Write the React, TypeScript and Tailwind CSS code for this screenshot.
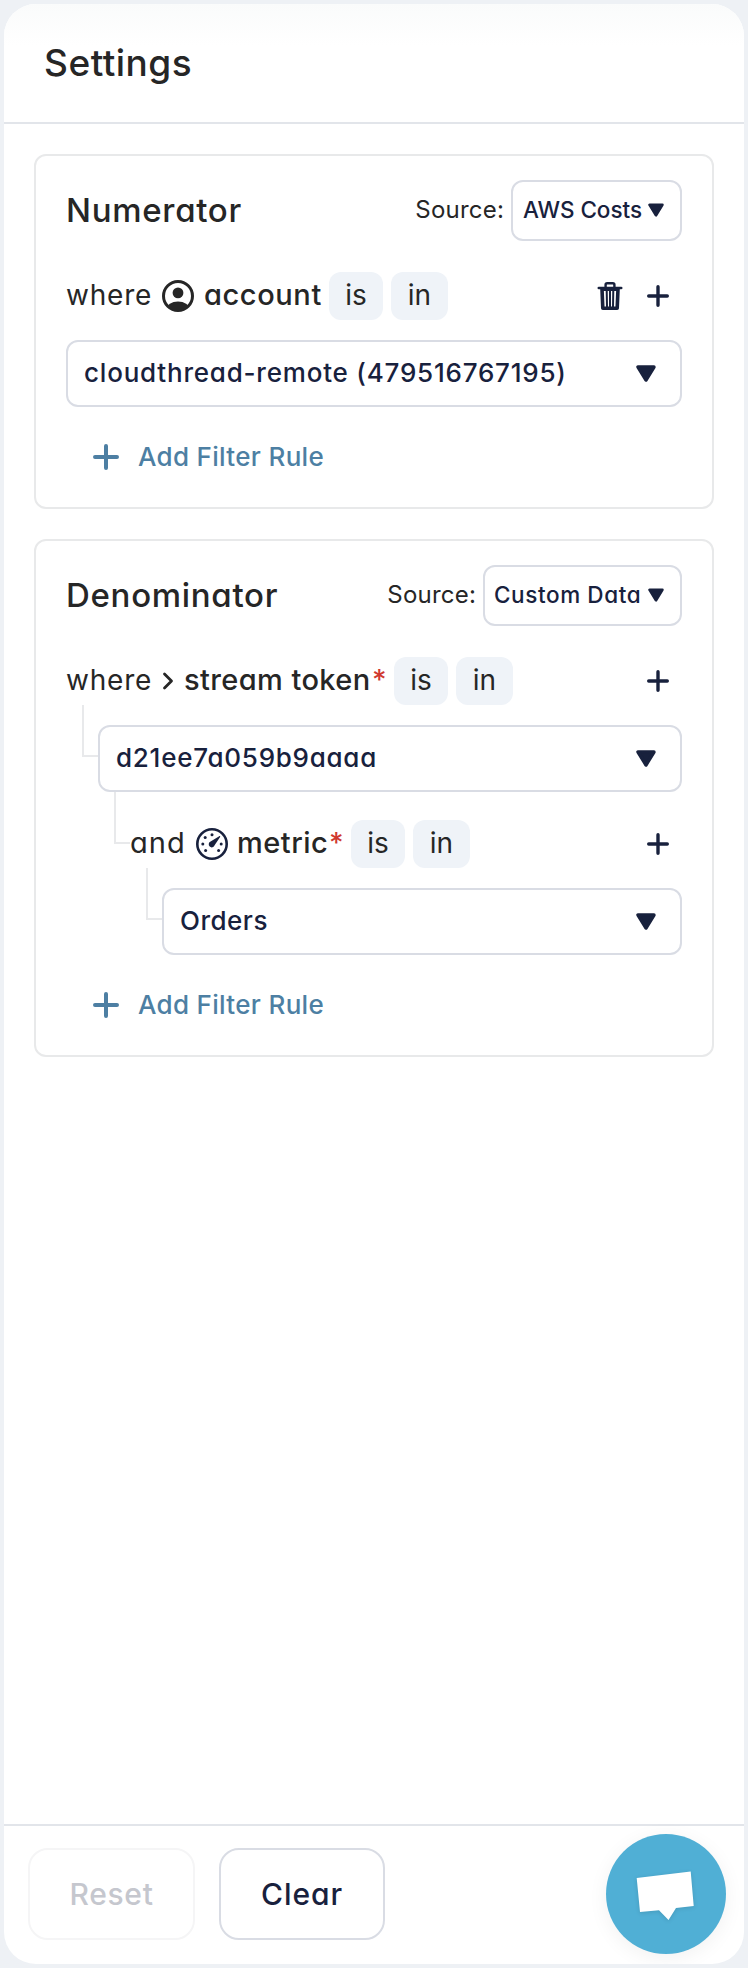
import type { ReactNode } from "react";

function Caret({ className }: { className: string }) {
  return (
    <svg viewBox="0 0 20 17" className={className} aria-hidden="true">
      <path
        d="M2 2h16l-8 13z"
        fill="currentColor"
        stroke="currentColor"
        strokeWidth="3.4"
        strokeLinejoin="round"
      />
    </svg>
  );
}

function PlusIcon({ className }: { className: string }) {
  return (
    <svg viewBox="0 0 26 26" className={className} aria-hidden="true">
      <path d="M13 2v22M2 13h22" stroke="currentColor" strokeWidth="4" strokeLinecap="round" />
    </svg>
  );
}

function AccountIcon() {
  return (
    <svg viewBox="0 0 32 32" className="ml-[9px] size-8 shrink-0" aria-hidden="true">
      <clipPath id="account-ring">
        <circle cx="16" cy="16" r="15" />
      </clipPath>
      <circle cx="16" cy="16" r="14.5" fill="none" stroke="currentColor" strokeWidth="3" />
      <circle cx="16" cy="12.9" r="5.4" fill="currentColor" />
      <ellipse cx="16" cy="29" rx="11.5" ry="7.4" fill="currentColor" clipPath="url(#account-ring)" />
    </svg>
  );
}

function GaugeIcon() {
  return (
    <svg viewBox="0 0 32 32" className="ml-[11px] size-8 shrink-0 text-[#18213d]" aria-hidden="true">
      <circle cx="16" cy="16" r="14.7" fill="none" stroke="currentColor" strokeWidth="2.6" />
      <g fill="currentColor">
        <circle cx="16" cy="6.8" r="1.5" />
        <circle cx="9.2" cy="9.4" r="1.5" />
        <circle cx="6.8" cy="16" r="1.5" />
        <circle cx="25.2" cy="16" r="1.5" />
        <circle cx="9.6" cy="22.4" r="1.5" />
        <circle cx="22.6" cy="22.4" r="1.5" />
        <path d="M23.2 8.2c.6-.4 1.3.2.9.9l-5.5 8.1a3 3 0 1 1-4-3.6z" />
      </g>
    </svg>
  );
}

function TrashIcon() {
  return (
    <svg viewBox="0 0 26 30" className="h-[30px] w-[26px]" fill="none" stroke="currentColor" aria-hidden="true">
      <path d="M1.8 7h22.4" strokeWidth="2.6" strokeLinecap="round" />
      <path d="M8.6 6V3.8Q8.6 2.2 10.2 2.2h5.6Q17.4 2.2 17.4 3.8V6" strokeWidth="2.4" />
      <path d="M5 8l.8 19.2h14.4L21 8" strokeWidth="3.6" strokeLinejoin="round" />
      <path d="M4.5 8.8h17" strokeWidth="2.4" />
      <path d="M9.7 9l.3 17M13 9v17M16.3 9l-.3 17" strokeWidth="2" />
    </svg>
  );
}

function ChevronIcon() {
  return (
    <svg viewBox="0 0 12 18" className="ml-[9px] h-[18px] w-3 shrink-0" fill="none" aria-hidden="true">
      <path d="M2.5 2l7 7-7 7" stroke="currentColor" strokeWidth="2.8" strokeLinecap="round" strokeLinejoin="round" />
    </svg>
  );
}

function Pill({ children, className }: { children: ReactNode; className: string }) {
  return (
    <span className={`h-12 shrink-0 rounded-xl bg-[#eff3f8] text-center leading-[46px] ${className}`}>
      {children}
    </span>
  );
}

function Pills() {
  return (
    <>
      <Pill className="w-[54px]">is</Pill>
      <Pill className="ml-2 w-[57px]">in</Pill>
    </>
  );
}

function RowActions({ removable = false }: { removable?: boolean }) {
  return (
    <div className="ml-auto flex items-center gap-[24px] pr-[13px] text-[#18213d]">
      {removable && (
        <button className="block">
          <TrashIcon />
        </button>
      )}
      <button className="block">
        <PlusIcon className="size-[22px]" />
      </button>
    </div>
  );
}

function Select({ children, tracking }: { children: ReactNode; tracking: string }) {
  return (
    <button className="flex h-[67px] flex-1 items-center justify-between rounded-xl border-2 border-[#d9dce4] pr-6 pl-4 text-[26px] font-medium text-[#18213d]">
      <span className={`pb-[2px] leading-[60px] whitespace-nowrap ${tracking}`}>{children}</span>
      <Caret className="h-[17px] w-5" />
    </button>
  );
}

function CardHeader({
  title,
  source,
  selectClass,
  textClass,
}: {
  title: string;
  source: string;
  selectClass: string;
  textClass: string;
}) {
  return (
    <div className="flex h-[61px] items-center">
      <h2 className="pb-px text-[33px] leading-[50px] font-medium tracking-[0.7px]">{title}</h2>
      <span className="mr-[7px] ml-auto pb-[2px] text-[24px] tracking-[0.2px]">Source:</span>
      <button
        className={`flex h-[61px] items-center justify-between rounded-xl border-2 border-[#d9dce4] pr-[16px] text-[22.5px] font-medium text-[#18213d] ${selectClass}`}
      >
        <span className={`pb-px whitespace-nowrap ${textClass}`}>{source}</span>
        <Caret className="mb-[2px] h-[14px] w-4" />
      </button>
    </div>
  );
}

function AddRule() {
  return (
    <button className="flex h-[100px] items-center pl-[27px] text-[26px] font-medium text-[#4d7fa3]">
      <PlusIcon className="size-[26px]" />
      <span className="ml-[19px] pb-px tracking-[0.32px]">Add Filter Rule</span>
    </button>
  );
}

function Elbow({ className }: { className: string }) {
  return <div className={`h-[52px] w-4 shrink-0 border-b-2 border-l-2 border-[#e8e9eb] ${className}`} />;
}

const card = "rounded-xl border-2 border-[#e8e9ea] px-[30px] pt-6";

export default function App() {
  return (
    <div className="h-[1968px] w-[748px] bg-[#eef1f5] p-1 font-['Inter',sans-serif] text-[#262626] [font-feature-settings:'cv11']">
      <div className="flex h-full flex-col overflow-hidden rounded-[32px] bg-white">
        <header className="flex h-[120px] shrink-0 items-center border-b-2 border-[#e2e5ea] bg-linear-to-b from-[#fafbfb] to-white to-35% pl-[40px]">
          <h1 className="text-[37px] font-medium tracking-[0.5px]">Settings</h1>
        </header>

        <main className="flex flex-1 flex-col gap-[30px] px-[30px] pt-[30px]">
          <section className={card}>
            <CardHeader
              title="Numerator"
              source="AWS Costs"
              selectClass="w-[171px] pl-[10px]"
              textClass="tracking-[-0.05px]"
            />
            <div className="mt-[31px] flex h-12 items-center text-[28px]">
              <span className="w-[87px] pb-[2px] leading-[46px] tracking-[0.8px]">where</span>
              <AccountIcon />
              <span className="ml-[10px] w-[125px] pb-[2px] text-[29px] leading-[46px] font-medium tracking-[0.6px]">
                account
              </span>
              <Pills />
              <RowActions removable />
            </div>
            <div className="mt-5 flex">
              <Select tracking="tracking-[0.79px]">cloudthread-remote (479516767195)</Select>
            </div>
            <AddRule />
          </section>

          <section className={card}>
            <CardHeader
              title="Denominator"
              source="Custom Data"
              selectClass="w-[199px] pl-[9px]"
              textClass="tracking-[0.6px]"
            />
            <div className="mt-[31px] flex h-12 items-center text-[28px]">
              <span className="w-[87px] pb-[2px] leading-[46px] tracking-[0.8px]">where</span>
              <ChevronIcon />
              <span className="ml-[10px] w-[188px] pb-[2px] text-[29px] leading-[46px] font-medium whitespace-nowrap tracking-[0.4px]">
                stream token
              </span>
              <span className="w-[22px] pb-[2px] leading-[46px] font-medium text-[#d0392f]">*</span>
              <Pills />
              <RowActions />
            </div>
            <div className="mt-5 flex items-start">
              <Elbow className="-mt-5 ml-4" />
              <Select tracking="tracking-[0.75px]">d21ee7a059b9aaaa</Select>
            </div>

            <div className="mt-7 flex h-12 items-start text-[28px]">
              <Elbow className="-mt-7 ml-12" />
              <div className="flex h-12 flex-1 items-center">
                <span className="w-[55px] pb-[2px] text-[29px] leading-[46px] tracking-[1.1px]">and</span>
                <GaugeIcon />
                <span className="ml-[9px] w-[92px] pb-[2px] text-[29px] leading-[46px] font-medium tracking-[0.5px]">
                  metric
                </span>
                <span className="w-[22px] pb-[2px] leading-[46px] font-medium text-[#d0392f]">*</span>
                <Pills />
                <RowActions />
              </div>
            </div>
            <div className="mt-5 flex items-start">
              <Elbow className="-mt-5 ml-20" />
              <Select tracking="tracking-[0.5px]">Orders</Select>
            </div>
            <AddRule />
          </section>
        </main>

        <footer className="flex h-[140px] shrink-0 items-start gap-6 border-t-2 border-[#e2e5ea] pt-[22px] pr-[18px] pl-6 text-[30px] font-medium">
          <button className="h-[92px] w-[167px] rounded-[20px] border-2 border-[#f5f5f6] tracking-[0.7px] text-[#c5c7ce]">
            Reset
          </button>
          <button className="h-[92px] w-[166px] rounded-[20px] border-2 border-[#d9dce4] tracking-[0.9px] text-[#18213d]">
            Clear
          </button>
          <button className="-mt-[14px] ml-auto size-[120px] rounded-full bg-[#50afd5] shadow-[0_4px_20px_rgba(0,0,0,0.06)]">
            <svg viewBox="0 0 120 120" className="size-full drop-shadow-[0_1px_2px_rgba(0,0,0,0.12)]" aria-hidden="true">
              <path d="M30.7 44L84.7 37.500 87.700 72 70 74 62.500 86 53 76.300 34 78z" fill="#fff" />
            </svg>
          </button>
        </footer>
      </div>
    </div>
  );
}
